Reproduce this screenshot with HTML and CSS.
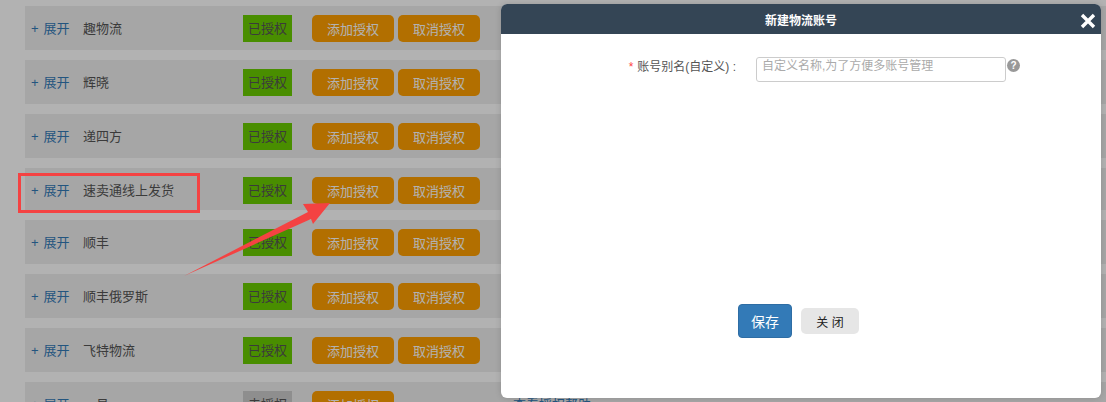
FILE: index.html
```html
<!DOCTYPE html>
<html lang="en">
<head>
    <meta charset="UTF-8">
    <meta name="viewport" content="width=device-width, initial-scale=1.0">
    <title>新建物流账号</title>
    <link rel="stylesheet" href="styles.css">
</head>
<body>
    <div class="list">
        <div class="row">
            <span class="expand"><i>+</i><a>展开</a></span><span class="name">趣物流</span>
            <span class="badge">已授权</span>
            <button class="btn-orange">添加授权</button><button class="btn-orange">取消授权</button>
        </div>
        <div class="row">
            <span class="expand"><i>+</i><a>展开</a></span><span class="name">辉晓</span>
            <span class="badge">已授权</span>
            <button class="btn-orange">添加授权</button><button class="btn-orange">取消授权</button>
        </div>
        <div class="row">
            <span class="expand"><i>+</i><a>展开</a></span><span class="name">递四方</span>
            <span class="badge">已授权</span>
            <button class="btn-orange">添加授权</button><button class="btn-orange">取消授权</button>
        </div>
        <div class="row row-short">
            <span class="expand"><i>+</i><a>展开</a></span><span class="name">速卖通线上发货</span>
            <span class="badge">已授权</span>
            <button class="btn-orange">添加授权</button><button class="btn-orange">取消授权</button>
        </div>
        <div class="row">
            <span class="expand"><i>+</i><a>展开</a></span><span class="name">顺丰</span>
            <span class="badge">已授权</span>
            <button class="btn-orange">添加授权</button><button class="btn-orange">取消授权</button>
        </div>
        <div class="row">
            <span class="expand"><i>+</i><a>展开</a></span><span class="name">顺丰俄罗斯</span>
            <span class="badge">已授权</span>
            <button class="btn-orange">添加授权</button><button class="btn-orange">取消授权</button>
        </div>
        <div class="row">
            <span class="expand"><i>+</i><a>展开</a></span><span class="name">飞特物流</span>
            <span class="badge">已授权</span>
            <button class="btn-orange">添加授权</button><button class="btn-orange">取消授权</button>
        </div>
        <div class="row">
            <span class="expand"><i>+</i><a>展开</a></span><span class="name">一号</span>
            <span class="badge badge-off">未授权</span>
            <button class="btn-orange">添加授权</button>
            <a class="help-link">查看授权帮助</a>
        </div>
    </div>

    <div class="mask"></div>

    <!-- annotation drawn on the screenshot -->
    <div class="mark-box"></div>
    <svg class="mark-arrow" width="180" height="95" viewBox="170 190 180 95">
        <path d="M184 276 L308 212 L303 204 L330 203 L313 224 L311 219 Z" fill="#f44242"/>
    </svg>

    <div class="modal">
        <div class="modal-head">
            <span class="modal-title">新建物流账号</span>
            <span class="modal-close">
                <svg width="16" height="16" viewBox="0 0 16 16"><path d="M2 2 L14 14 M14 2 L2 14" stroke="#fff" stroke-width="3.4"/></svg>
            </span>
        </div>
        <div class="modal-body">
            <div class="form-row">
                <label class="form-label"><em>*</em><span>账号别名(自定义) :</span></label>
                <textarea class="form-input" placeholder="自定义名称,为了方便多账号管理"></textarea>
                <span class="tip">?</span>
            </div>
            <div class="modal-foot">
                <button class="btn-save">保存</button>
                <button class="btn-close">关 闭</button>
            </div>
        </div>
    </div>
</body>
</html>
```

FILE: styles.css
```css
html, body {
    margin: 0;
    height: 402px;
    overflow: hidden;
}

body {
    font-family: "Liberation Sans", "Noto Sans CJK SC", sans-serif;
    font-size: 13px;
    background-color: #fff;
    color: #555;
    position: relative;
}

.list {
    padding: 6px 0 0 25px;
}

.row {
    display: flex;
    align-items: flex-start;
    height: 44px;
    margin-bottom: 10px;
    padding-top: 9px;
    box-sizing: border-box;
    background-color: #eee;
}

.row-short {
    height: 42px;
}

.expand {
    width: 52px;
    padding-left: 6px;
    line-height: 27px;
    color: #337ab7;
    flex-shrink: 0;
}

.expand i {
    font-style: normal;
    margin-right: 5px;
}

.name {
    width: 160px;
    line-height: 27px;
    flex-shrink: 0;
}

.badge {
    width: 49px;
    height: 27px;
    line-height: 27px;
    text-align: center;
    background-color: #69cc00;
    margin-right: 20px;
    flex-shrink: 0;
}

.badge-off {
    background-color: #ccc;
}

.btn-orange {
    width: 82px;
    height: 27px;
    margin-right: 4px;
    padding: 0;
    border: none;
    border-radius: 5px;
    background-color: #ff9f00;
    color: #fff;
    font-family: inherit;
    font-size: 13px;
    flex-shrink: 0;
}

.help-link {
    margin-left: 115px;
    line-height: 27px;
    color: #337ab7;
}

.mask {
    position: absolute;
    top: 0;
    left: 0;
    width: 100%;
    height: 100%;
    background-color: rgba(0, 0, 0, 0.3);
}

.mark-box {
    position: absolute;
    left: 18px;
    top: 173px;
    width: 176px;
    height: 34px;
    border: 3px solid #f44242;
}

.mark-arrow {
    position: absolute;
    left: 170px;
    top: 190px;
}

.modal {
    position: absolute;
    left: 501px;
    top: 4px;
    width: 600px;
    height: 394px;
    background-color: #fff;
    border-radius: 6px;
    overflow: hidden;
    box-shadow: 0 0 6px rgba(0, 0, 0, 0.15);
    display: flex;
    flex-direction: column;
}

.modal-head {
    height: 30px;
    background-color: #344555;
    display: flex;
    align-items: center;
    justify-content: center;
    position: relative;
    flex-shrink: 0;
}

.modal-title {
    color: #fff;
    font-size: 12px;
    font-weight: bold;
}

.modal-close {
    position: absolute;
    right: 5px;
    top: 9px;
    height: 16px;
}

.modal-body {
    flex: 1;
    display: flex;
    flex-direction: column;
    justify-content: space-between;
    padding-top: 23px;
}

.form-row {
    display: flex;
    align-items: flex-start;
}

.form-label {
    width: 235px;
    margin-right: 20px;
    text-align: right;
    font-size: 12px;
    line-height: 20px;
    color: #555;
    flex-shrink: 0;
}

.form-label em {
    font-style: normal;
    color: #f44;
    margin-right: 4px;
}

.form-input {
    width: 250px;
    height: 25px;
    box-sizing: border-box;
    margin: 0;
    padding: 0 5px;
    border: 1px solid #ccc;
    border-radius: 3px;
    font-family: inherit;
    font-size: 12px;
    line-height: 16px;
    resize: none;
    outline: none;
}

.form-input::placeholder {
    color: #aaa;
}

.tip {
    width: 13px;
    height: 13px;
    margin: 2px 0 0 1px;
    border-radius: 50%;
    background-color: #999;
    color: #fff;
    font-size: 10px;
    font-weight: bold;
    line-height: 13px;
    text-align: center;
}

.modal-foot {
    display: flex;
    align-items: center;
    justify-content: center;
    gap: 9px;
    padding-bottom: 60px;
    margin-left: -5px;
}

.btn-save {
    width: 54px;
    height: 34px;
    padding: 0;
    border: 1px solid #2e6da4;
    border-radius: 4px;
    background-color: #337ab7;
    color: #fff;
    font-family: inherit;
    font-size: 14px;
}

.btn-close {
    width: 58px;
    height: 26px;
    padding: 0;
    border: none;
    border-radius: 5px;
    background-color: #e6e6e6;
    color: #222;
    font-family: inherit;
    font-size: 12px;
}
```
